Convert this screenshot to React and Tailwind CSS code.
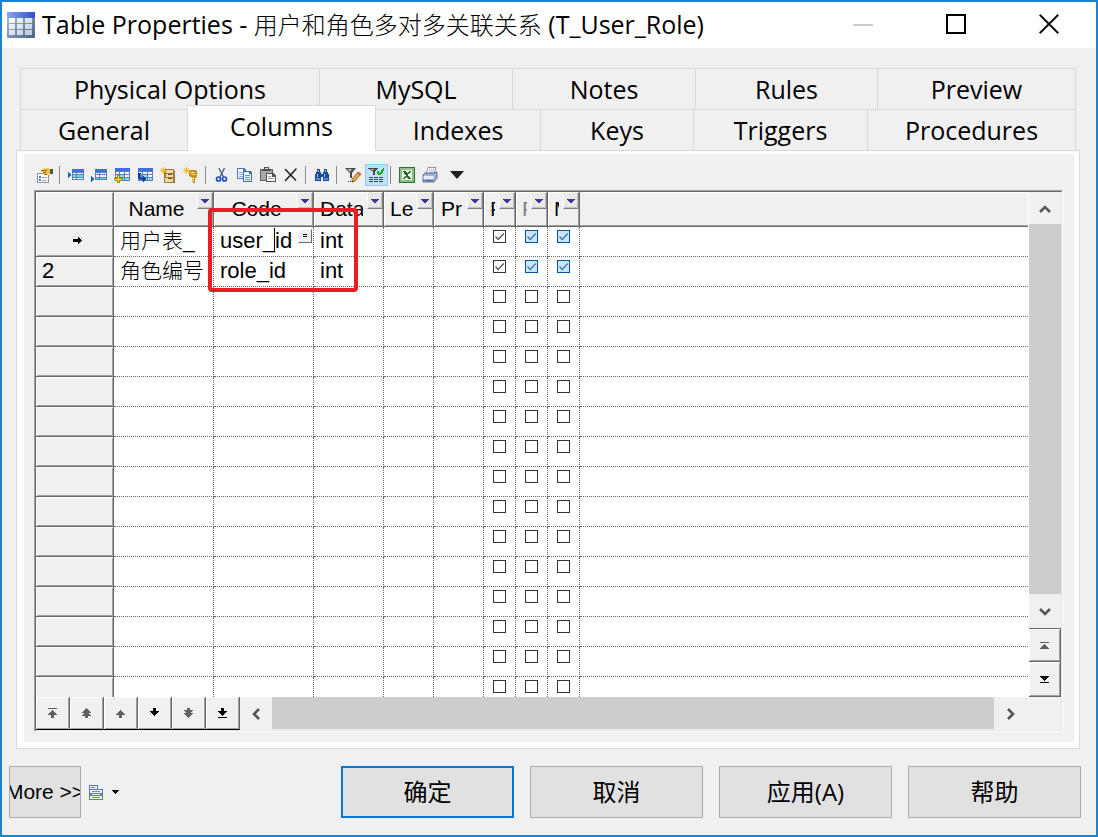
import React, { useState } from 'react';
import clsx from 'clsx';

const backTabs = ['Physical Options', 'MySQL', 'Notes', 'Rules', 'Preview'];
const frontTabs = ['General', 'Columns', 'Indexes', 'Keys', 'Triggers', 'Procedures'];

const headers = [
  { label: 'Name' },
  { label: 'Code' },
  { label: 'Data Type' },
  { label: 'Length' },
  { label: 'Precision' },
  { label: 'P' },
  { label: 'F', disabled: true },
  { label: 'M' },
];
// only the part of each caption that fits its column is drawn
const shortLabels = { 'Data Type': 'Data', Length: 'Le', Precision: 'Pr' };

const rows = [
  { name: '用户表_', code: 'user_id', type: 'int', current: true },
  { name: '角色编号', code: 'role_id', type: 'int' },
  ...Array.from({ length: 14 }, () => null),
];

/* ---------- icons ---------- */

const Icon = ({ children, crisp = true }) => (
  <svg
    viewBox="0 0 16 16"
    className="w-4 h-4 shrink-0"
    fill="none"
    shapeRendering={crisp ? 'crispEdges' : 'auto'}
    aria-hidden="true"
  >
    {children}
  </svg>
);

const TableLogo = () => (
  <svg viewBox="0 0 28 26" className="w-7 h-[26px] shrink-0" aria-hidden="true">
    <defs>
      <linearGradient id="logoTop" x1="0" x2="1">
        <stop offset="0" stopColor="#8aa6f0" />
        <stop offset="1" stopColor="#2f4fc8" />
      </linearGradient>
      <linearGradient id="logoBody" x1="0" y1="0" x2="1" y2="1">
        <stop offset="0" stopColor="#b4c4e0" />
        <stop offset="1" stopColor="#4a6080" />
      </linearGradient>
      <linearGradient id="logoCells" x1="0" y1="0" x2="1" y2="1">
        <stop offset="0" stopColor="#ffffff" />
        <stop offset="1" stopColor="#b8c8e0" />
      </linearGradient>
    </defs>
    <rect x="0" y="0" width="28" height="26" rx="1" fill="url(#logoBody)" />
    <rect x="0" y="0" width="28" height="6" fill="url(#logoTop)" />
    <path d="M2 6h6v5H2zM10 6h6v5h-6zM18 6h7v5h-7zM2 12h6v5H2zM10 12h6v5h-6zM18 12h7v5h-7zM2 18h6v5H2zM10 18h6v5h-6zM18 18h7v5h-7z" fill="url(#logoCells)" />
  </svg>
);

const MiniTable = ({ x = 4, y = 2, accent }) => (
  <>
    <rect x={x} y={y} width="12" height="11" fill="#5b7fb5" />
    <rect x={x} y={y} width="12" height="3" fill="#3f6fe0" />
    {[0, 1, 2].map((r) =>
      [0, 1, 2].map((c) => (
        <rect
          key={`${r}-${c}`}
          x={x + 1 + c * 4 - (c === 2 ? 1 : 0)}
          y={y + 4 + r * 2 + (r === 2 ? 1 : 0)}
          width="3"
          height={r === 1 ? 2 : 1}
          fill={r === accent ? '#5fe0f0' : '#fff'}
        />
      ))
    )}
  </>
);

const Spark = () => (
  <path d="M3 0h1v7h-1zM0 3h7v1H0zM1 1h1v1H1zM5 1h1v1H5zM1 5h1v1H1zM5 5h1v1H5zM2 2h3v3H2z" fill="#f0c020" />
);

const PropertiesIcon = () => (
  <Icon>
    <path d="M0 6h12v10H0z" fill="#8a94a8" />
    <path d="M1 7h10v8H1z" fill="#fff" />
    <path d="M2 9h2v2H2zM2 12h2v2H2z" fill="#5578c0" />
    <path d="M5 10h5v1H5zM5 13h5v1H5z" fill="#9aa4b8" />
    <path d="M4 3l4-2h4l1 2v4l-3 1-2-1H6V5H4z" fill="#f2c445" />
    <path d="M4 3h6v1H4zM6 5h3v1H6zM7 7h3v1H7z" fill="#8a6510" />
    <path d="M13 2h3v5h-3z" fill="#4a5a48" />
  </Icon>
);

const InsertRowIcon = () => (
  <Icon>
    <path d="M0 5l3 3-3 3z" fill="#2060d0" />
    <MiniTable accent={1} />
  </Icon>
);

const AddRowIcon = () => (
  <Icon>
    <path d="M0 9l3 3-3 3z" fill="#2060d0" />
    <MiniTable accent={2} />
  </Icon>
);

const AddColumnsIcon = () => (
  <Icon>
    <path d="M1 1h15v13H1z" fill="#5b7fb5" />
    <path d="M1 1h15v3H1z" fill="#3f6fe0" />
    <path d="M2 5h3v2H2zM6 5h4v2H6zM11 5h4v2h-4zM2 8h3v2H2zM11 8h4v2h-4z" fill="#fff" />
    <path d="M6 8h4v2H6zM6 11h4v2H6zM11 11h4v2h-4z" fill="#6fe6f2" />
    <path d="M3 8h3v3h3v2H6v3H3v-3H0v-2h3z" fill="#a88400" />
    <path d="M4 9h1v3h3v1H5v2H4v-2H1v-1h3z" fill="#ffe838" />
  </Icon>
);

const ReplicateIcon = () => (
  <Icon>
    <path d="M1 1h15v13H1z" fill="#5b7fb5" />
    <path d="M1 1h15v3H1z" fill="#3f6fe0" />
    <path d="M2 5h3v2H2zM6 5h4v2H6zM11 5h4v2h-4zM11 8h4v2h-4z" fill="#fff" />
    <path d="M6 8h4v2H6zM8 11h2v2H8zM11 11h4v2h-4z" fill="#6fe6f2" />
    <path d="M1 6h3v1H3v3h1v1h2V9h1v1h1v1h1v2H8v1H7v1H6v-2H4v-1H2v-1H1z" fill="#123a9c" />
  </Icon>
);

const DomainIcon = () => (
  <Icon>
    <path d="M5 2h9v2h1v11l-1 1H4V7z" fill="#9c7a3c" />
    <path d="M6 3h7v3H6zM6 7h7v3H6zM5 11h8v4H5z" fill="#ecd9a4" />
    <path d="M8 7h4v1H8zM8 11h4v1H8z" fill="#6e5424" />
    <Spark />
  </Icon>
);

const KeyIcon = () => (
  <Icon>
    <path d="M6 4l2-1h4l2 2v4l-2 2v5h-2l-1-1v-1h1v-1h-1v-1l1-1-3-1-1-2z" fill="#c98a14" />
    <path d="M7 5h5v1H7zM8 7h5v1H8zM10 10h1v5h-1z" fill="#ffdf70" />
    <path d="M9 5h2v1H9z" fill="#fff" />
    <Spark />
  </Icon>
);

const CutIcon = () => (
  <Icon crisp={false}>
    <path d="M5 1l4.500 9M10.500 1L6 10" stroke="#4a5870" strokeWidth="1.300" />
    <circle cx="4.500" cy="12" r="2" stroke="#1c50c0" strokeWidth="1.700" />
    <circle cx="10.500" cy="12" r="2" stroke="#1c50c0" strokeWidth="1.700" />
  </Icon>
);

const CopyIcon = () => (
  <Icon>
    <path d="M0 1h7l2 2v9H0z" fill="#4a78b8" />
    <path d="M1 2h5v2h2v7H1z" fill="#fff" />
    <path d="M2 5h5v1H2zM2 7h5v1H2zM2 9h4v1H2z" fill="#7da4dc" />
    <path d="M6 4h7l2 2v9H6z" fill="#3c6cb0" />
    <path d="M7 5h5v2h2v7H7z" fill="#eef5ff" />
    <path d="M8 8h5v1H8zM8 10h5v1H8zM8 12h5v1H8z" fill="#5f90d4" />
  </Icon>
);

const PasteIcon = () => (
  <Icon>
    <path d="M0 2h13v12H0z" fill="#606060" />
    <path d="M1 3h11v10H1z" fill="#a8a8a8" />
    <path d="M4 0h5v2h2v2H2V2h2z" fill="#505050" />
    <path d="M5 1h3v1H5z" fill="#ddd" />
    <path d="M6 6h7l3 3v6H6z" fill="#555" />
    <path d="M7 7h5v3h3v4H7z" fill="#fff" />
    <path d="M8 9h3v1H8zM8 11h6v1H8z" fill="#999" />
  </Icon>
);

const DeleteIcon = () => (
  <Icon crisp={false}>
    <path d="M2.500 2.500l10 10.500M13 2L2.500 13.500" stroke="#222" strokeWidth="1.600" strokeLinecap="round" />
  </Icon>
);

const FindIcon = () => (
  <Icon>
    <path d="M3 2h3v3h1v2h2V5h1V2h3v3h1v2h1v7H9v-4H7v4H1V7h1V5h1z" fill="#1d4a94" />
    <path d="M4 3h1v2H4zM11 3h1v2h-1zM3 7h1v3H3zM10 7h1v3h-1z" fill="#a8c8f0" />
    <path d="M2 11h4v2H2zM10 11h4v2h-4z" fill="#5c90d8" />
  </Icon>
);

const FilterEditIcon = () => (
  <Icon crisp={false}>
    <path d="M0 1h11L7 6v5H5V6z" fill="#4c4c4c" />
    <path d="M2.500 2h4L5.500 5z" fill="#c8c8c8" />
    <path d="M7 12l6-7 3 2-6 7-3 1z" fill="#e0a848" stroke="#7a5520" strokeWidth=".7" />
    <path d="M13 5l3 2-1 1.500-3-2z" fill="#e05050" />
    <path d="M3 14h1v1H3zM5 14h1v1H5zM7 14h1v1H7z" fill="#222" />
  </Icon>
);

const FilterOnIcon = () => (
  <Icon>
    <path d="M0 1h10v1H9v1H8v1H7v4H5V4H3V3H2V2H0z" fill="#444" />
    <path d="M3 2h3v1H3z" fill="#ccc" />
    <path d="M9 4h2v2h1V5h1V3h1V2h1V1h1v3h-1v2h-1v1h-1v1h-3V7H9z" fill="#12b012" />
    <path d="M1 10h4v1H1zM6 10h4v1H6zM11 10h4v1h-4zM1 12h4v1H1zM6 12h4v1H6zM11 12h4v1h-4zM1 14h4v1H1zM6 14h4v1H6zM11 14h4v1h-4z" fill="#22429a" />
  </Icon>
);

const ExcelIcon = () => (
  <Icon>
    <path d="M0 0h16v16H0z" fill="#2c7430" />
    <path d="M1 1h14v14H1z" fill="#8cc088" />
    <path d="M3 3h10v10H3z" fill="#f2f8f0" />
    <path d="M4 4h3v1h1v1h1V5h1V4h2v1h-1v1h-1v1H9v2h1v1h1v1h1v1H9v-1H8v-1H7v1H6v1H4v-1h1v-1h1V9h1V8H6V7H5V5H4z" fill="#1f6a26" />
  </Icon>
);

const PrintIcon = () => (
  <Icon crisp={false}>
    <path d="M6 .5h8L11.500 8H3.500z" fill="#fff" stroke="#7a8cb0" strokeWidth=".9" />
    <path d="M7 3h5M6.500 5h5" stroke="#8fa8d0" strokeWidth=".8" />
    <path d="M1 8l2-2h9l3-1v6l-3 4H1z" fill="#9fb2d0" stroke="#4c628c" strokeWidth=".9" />
    <path d="M1.500 9h10v3h-10z" fill="#e4ecf8" />
    <path d="M3 13h8v1H3z" fill="#4c628c" />
  </Icon>
);

const MenuIcon = () => (
  <svg viewBox="0 0 14 15" className="w-3.5 h-[15px]" shapeRendering="crispEdges" aria-hidden="true">
    <path d="M0 0h9v4h5v11H0z" fill="#5a76b4" />
    <path d="M1 1h7v3H1z" fill="#eaf0fa" />
    <path d="M2 2h4v1H2z" fill="#8a8a8a" />
    <path d="M1 5h12v9H1z" fill="#eef2fa" />
    <path d="M3 6h8v1H3zM3 12h8v1H3z" fill="#808890" />
    <path d="M1 8h12v3H1z" fill="#4a78f0" />
    <path d="M3 9h8v1H3z" fill="#fff" />
  </svg>
);

// arrows of the row navigation bar, on a 9 x 10 canvas
const navPaths = {
  first: 'M0 0h9v1H0zM4 2h1v1h1v1h1v1h1v1h1v1H6v3H3V7H0V6h1V5h1V4h1V3h1z',
  pageUp: 'M4 0h1v1h1v1h1v1h1v1h1v1H7v1h1v1h1v1H6v2H3V8H0V7h1V6h1V5H0V4h1V3h1V2h1V1h1z',
  up: 'M4 2h1v1h1v1h1v1h1v1h1v1H6v3H3V7H0V6h1V5h1V4h1V3h1z',
  down: 'M3 0h3v3h3v1H8v1H7v1H6v1H5v1H4V7H3V6H2V5H1V4H0V3h3z',
  pageDown: 'M3 0h3v2h3v1H8v1H7v1h2v1H8v1H7v1H6v1H5v1H4V9H3V8H2V7H1V6H0V5h2V4H1V3H0V2h3z',
  last: 'M3 0h3v3h3v1H8v1H7v1H6v1H5v1H4V7H3V6H2V5H1V4H0V3h3zM0 9h9v1H0z',
};

const NavArrow = ({ kind }) => (
  <svg viewBox="0 0 9 10" width="9" height="10" fill="currentColor" shapeRendering="crispEdges" aria-hidden="true">
    <path d={navPaths[kind]} />
  </svg>
);

const Chevron = ({ d }) => (
  <svg viewBox="0 0 12 12" width="12" height="12" fill="none" stroke="#555" strokeWidth="2.600" aria-hidden="true">
    <path d={d} />
  </svg>
);

/* ---------- pieces ---------- */

const toolbar = [
  [['Properties', PropertiesIcon]],
  [
    ['Insert a Row', InsertRowIcon],
    ['Add a Row', AddRowIcon],
    ['Add Columns', AddColumnsIcon],
    ['Replicate Columns', ReplicateIcon],
    ['Create Domain', DomainIcon],
    ['Create Key', KeyIcon],
  ],
  [
    ['Cut', CutIcon],
    ['Copy', CopyIcon],
    ['Paste', PasteIcon],
    ['Delete', DeleteIcon],
  ],
  [['Find a Row', FindIcon]],
  [
    ['Customize Columns and Filter', FilterEditIcon],
    ['Enable Filter', FilterOnIcon],
  ],
  [
    ['Export to Excel', ExcelIcon],
    ['Print', PrintIcon],
  ],
];

const Toolbar = () => (
  <div className="flex items-center h-6">
    {toolbar.map((group, i) => (
      <React.Fragment key={group[0][0]}>
        {i > 0 && <span className="w-2 pl-0.5"><span className="block w-px h-[18px] bg-[#8c8c8c]" /></span>}
        {group.map(([label, Glyph]) => (
          <button
            type="button"
            key={label}
            aria-label={label}
            className={clsx(
              'flex items-center w-[23px] h-[22px] border pl-0.5',
              label === 'Enable Filter' ? 'bg-[#c2e0f7] border-[#90c8f6]' : 'border-transparent'
            )}
          >
            <Glyph />
          </button>
        ))}
      </React.Fragment>
    ))}
    <button type="button" aria-label="More tools" className="flex items-center justify-center w-[30px] h-[22px]">
      <svg viewBox="0 0 14 8" width="14" height="8" aria-hidden="true">
        <path d="M0 0h14L7 8z" fill="#1e1e1e" />
      </svg>
    </button>
  </div>
);

const Tab = ({ label, active, onClick }) => (
  <button
    type="button"
    role="tab"
    aria-selected={active}
    onClick={onClick}
    className={clsx(
      'border-t border-l border-[#d9d9d9] last:border-r text-[25px] leading-8',
      active ? 'relative bg-white -mt-1 -mb-px -mr-px border-r pb-1.5' : 'bg-[#f0f0f0]'
    )}
  >
    {label}
  </button>
);

const CheckBox = ({ label, checked, disabled }) => (
  <label className="grid w-[13px] h-[13px]">
    <input
      type="checkbox"
      aria-label={label}
      defaultChecked={checked}
      className={clsx(
        'appearance-none [grid-area:1/1] w-[13px] h-[13px] border',
        disabled ? 'bg-[#cce4f7] border-[#00559b]' : 'bg-white border-[#333]'
      )}
    />
    {checked && (
      <svg
        viewBox="0 0 13 13"
        className={clsx('[grid-area:1/1] pointer-events-none', disabled ? 'text-[#3a78b4]' : 'text-[#555]')}
        fill="none"
        stroke="currentColor"
        strokeWidth="1.300"
        aria-hidden="true"
      >
        <path d="M2.500 6.500l2.700 3L10.800 3.500" />
      </svg>
    )}
  </label>
);

const raised = 'border-r border-b border-[#696969] shadow-[inset_1px_1px_0_#fff,inset_-1px_-1px_0_#a0a0a0]';

const HeaderCell = ({ label, disabled }) => (
  <th scope="col" className={clsx('h-[35px] p-0 bg-[#f0f0f0] font-normal text-[21px]', raised)}>
    <div className="flex h-[34px]">
      <div className="flex-1 min-w-0 pl-1.5 pr-1">
        <div className={clsx('overflow-hidden whitespace-nowrap leading-[34px]', disabled && 'text-[#808080]')}>
          {shortLabels[label] || label}
        </div>
      </div>
      <button
        type="button"
        aria-label={`Filter ${label}`}
        className="flex items-center justify-center shrink-0 w-4 h-[17px] border border-t-white border-l-white border-r-[#808080] border-b-[#808080] bg-[#e8e8e8] shadow-[inset_-1px_-1px_0_#c0c0c0]"
      >
        <svg viewBox="0 0 8 4" width="8" height="4" shapeRendering="crispEdges" aria-hidden="true">
          <path d="M0 0h8v1H7v1H6v1H5v1H3V3H2V2H1V1H0z" fill="#38389a" />
        </svg>
      </button>
    </div>
  </th>
);

const cell = 'h-[30px] border-r border-b border-dotted border-[#696969] overflow-hidden whitespace-nowrap';

const ColumnRow = ({ row, index }) => {
  const n = index + 1;
  return (
    <tr>
      <th scope="row" className={clsx('h-[30px] p-0 pl-1.5 pb-0.5 bg-[#f0f0f0] font-normal text-left leading-[26px]', raised)}>
        {row?.current ? (
          <svg viewBox="0 0 9 7" width="9" height="7" className="mx-auto" shapeRendering="crispEdges" aria-label="Current row">
            <path d="M0 2h5V0h1v1h1v1h1v1h1v1H8v1H7v1H6v1H5V5H0z" />
          </svg>
        ) : (
          row && n
        )}
      </th>
      <td className={clsx(cell, 'p-0 pl-1.5 pb-0.5 text-[21px] leading-[26px] font-light')}>{row?.name}</td>
      <td className={clsx(cell, 'p-0 pb-0.5')}>
        {row?.current ? (
          <div className="relative flex items-start">
            <input
              aria-label="Code"
              defaultValue={row.code}
              className="flex-1 min-w-0 h-[26px] pl-1.5 bg-transparent outline-none leading-[26px]"
            />
            <span className="absolute left-[60px] top-0 w-px h-6 bg-black" />
            <button
              type="button"
              aria-label="Expand code"
              className="flex items-center justify-center w-3.5 h-3.5 mt-px mr-px border border-t-white border-l-white border-r-[#696969] border-b-[#696969] bg-[#f0f0f0]"
            >
              <svg viewBox="0 0 4 3" width="4" height="3" shapeRendering="crispEdges" aria-hidden="true">
                <path d="M0 0h4v1H0zM0 2h4v1H0z" />
              </svg>
            </button>
          </div>
        ) : (
          <div className="pl-1.5 leading-[26px]">{row?.code}</div>
        )}
      </td>
      <td className={clsx(cell, 'p-0 pb-0.5')}>
        <div className="pl-1.5 leading-[26px]">{row?.type}</div>
      </td>
      <td className={clsx(cell, 'p-0')} />
      <td className={clsx(cell, 'p-0')} />
      {['Primary', 'Foreign', 'Mandatory'].map((flag) => (
        <td key={flag} className={clsx(cell, 'align-top p-0 pt-[3px] pl-[9px]')}>
          <CheckBox label={`${flag} ${n}`} checked={!!row} disabled={!!row && flag !== 'Primary'} />
        </td>
      ))}
      <td className="h-[30px] p-0 border-b border-dotted border-[#696969]" />
    </tr>
  );
};

const ColumnTable = () => (
  <table className="table-fixed w-full border-separate border-spacing-0">
    <colgroup>
      <col className="w-[78px]" />
      <col className="w-[100px]" />
      <col className="w-[100px]" />
      <col className="w-[70px]" />
      <col className="w-[50px]" />
      <col className="w-[50px]" />
      <col className="w-8" />
      <col className="w-8" />
      <col className="w-8" />
      <col />
    </colgroup>
    <thead>
      <tr>
        <td className={clsx('p-0 bg-[#f0f0f0]', raised)} />
        {headers.map((h) => (
          <HeaderCell key={h.label} {...h} />
        ))}
        <td className="p-0 bg-[#f0f0f0] border-b border-[#696969] shadow-[inset_0_1px_0_#fff,inset_0_-1px_0_#a0a0a0]" />
      </tr>
    </thead>
    <tbody>
      {rows.map((row, i) => (
        <ColumnRow key={i} row={row} index={i} />
      ))}
    </tbody>
  </table>
);

const VerticalScroll = () => (
  <div className="flex flex-col w-[33px] shrink-0 border-l border-white">
    <button type="button" aria-label="Scroll up" className="flex items-center justify-center h-8 pt-0.5">
      <Chevron d="M1 9l5-5 5 5" />
    </button>
    <div className="flex-1 bg-[#cdcdcd]" />
    <button type="button" aria-label="Scroll down" className="flex items-center justify-center h-[34px] pt-0.5">
      <Chevron d="M1 3l5 5 5-5" />
    </button>
    <button type="button" aria-label="Scroll to top" className={clsx('flex items-center justify-center h-[34px] border-t text-[#606060]', raised)}>
      <svg viewBox="0 0 9 7" width="9" height="7" fill="currentColor" shapeRendering="crispEdges" aria-hidden="true">
        <path d="M0 0h9v1H0zM4 2h1v1h1v1h1v1h1v1h1v1H0V6h1V5h1V4h1V3h1z" />
      </svg>
    </button>
    <button type="button" aria-label="Scroll to bottom" className={clsx('flex items-center justify-center h-[35px]', raised)}>
      <svg viewBox="0 0 9 7" width="9" height="7" fill="currentColor" shapeRendering="crispEdges" aria-hidden="true">
        <path d="M0 6h9v1H0zM0 0h9v1H8v1H7v1H6v1H5v1H4V4H3V3H2V2H1V1H0z" />
      </svg>
    </button>
  </div>
);

const NavBar = () => (
  <div className="flex h-[33px]">
    {Object.keys(navPaths).map((kind, i) => (
      <button
        type="button"
        key={kind}
        aria-label={`Go ${kind}`}
        className={clsx(
          'flex items-center justify-center w-[34px] border-r border-b border-r-[#696969] border-b-black shadow-[inset_1px_1px_0_#fff,inset_-1px_-1px_0_#a0a0a0]',
          i < 3 || kind === 'pageDown' ? 'text-[#606060]' : 'text-black'
        )}
      >
        <NavArrow kind={kind} />
      </button>
    ))}
    <button type="button" aria-label="Scroll left" className="flex items-center justify-center w-8">
      <Chevron d="M9 1L4 6l5 5" />
    </button>
    <div className="flex-1 h-8 bg-[#cdcdcd]" />
    <button type="button" aria-label="Scroll right" className="flex items-center justify-center w-[34px] mr-[33px]">
      <Chevron d="M3 1l5 5-5 5" />
    </button>
  </div>
);

const TitleBar = () => (
  <header className="flex items-center h-[46px] shrink-0 pl-[5px] pr-px bg-white">
    <TableLogo />
    <h1 className="flex-1 pl-[7px] pb-0.5 text-[25px] leading-8 whitespace-nowrap">
      Table Properties - <span className="text-2xl font-light">用户和角色多对多关联关系</span> (T_User_Role)
    </h1>
    <button type="button" aria-label="Minimize" className="flex items-center justify-center w-[93px] h-full">
      <span className="w-5 h-0.5 bg-[#cbcbcb]" />
    </button>
    <button type="button" aria-label="Maximize" className="flex items-center justify-center w-[93px] h-full pb-0.5">
      <span className="w-5 h-5 border-2 border-black" />
    </button>
    <button type="button" aria-label="Close" className="flex items-center justify-center w-[93px] h-full pb-0.5">
      <svg viewBox="0 0 20 20" width="20" height="20" stroke="#111" strokeWidth="2" aria-hidden="true">
        <path d="M.7.7l18.600 18.600M19.300.7L.7 19.300" />
      </svg>
    </button>
  </header>
);

const App = () => {
  const [tab, setTab] = useState('Columns');

  return (
    <div className='flex flex-col h-screen border-2 border-[#1883d7] bg-[#f0f0f0] text-black font-["Open_Sans","Noto_Sans_CJK_SC",sans-serif]'>
      <TitleBar />

      <main className="flex flex-col flex-1 min-h-0 pl-3.5 pr-4 pt-5">
        <div role="tablist" className="px-1">
          <div className="grid grid-cols-[299fr_193fr_183fr_182fr_199fr] h-[41px]">
            {backTabs.map((t) => (
              <Tab key={t} label={t} active={t === tab} onClick={() => setTab(t)} />
            ))}
          </div>
          <div className="grid grid-cols-[167fr_188fr_165fr_153fr_174fr_209fr] h-[41px]">
            {frontTabs.map((t) => (
              <Tab key={t} label={t} active={t === tab} onClick={() => setTab(t)} />
            ))}
          </div>
        </div>

        <div className="flex flex-col flex-1 min-h-0 border border-[#d9d9d9] bg-white pt-[3px] pb-1.5 pl-[7px] pr-[5px]">
          <div className="flex flex-col flex-1 min-h-0 bg-[#f0f0f0] pt-[9px] pb-2.5 pl-2.5 pr-[11px]">
            <Toolbar />

            {/* sunken grid frame */}
            <div className='flex flex-1 min-h-0 mt-[3px] border border-t-[#a0a0a0] border-l-[#a0a0a0] border-r-white border-b-white text-[22px] font-["Liberation_Sans","Noto_Sans_CJK_SC",sans-serif]'>
              <div className="flex flex-col flex-1 min-w-0 border border-t-[#696969] border-l-[#696969] border-r-[#e3e3e3] border-b-[#e3e3e3]">
                <div className="flex flex-1 min-h-0">
                  <div className="relative flex-1 min-w-0 overflow-hidden bg-white">
                    <ColumnTable />
                    {/* highlight around the key columns */}
                    <div className="absolute left-[172px] top-4 w-[150px] h-[84px] border-4 border-[#ed1c24] rounded-sm pointer-events-none" />
                  </div>
                  <VerticalScroll />
                </div>
                <NavBar />
              </div>
            </div>
          </div>
        </div>
      </main>

      <footer className="flex items-center shrink-0 pt-[17px] pb-[17px] pl-[7px] pr-[15px]">
        <button
          type="button"
          className='flex items-center justify-center w-[72px] h-[52px] border border-[#adadad] bg-[#e1e1e1] overflow-hidden whitespace-nowrap text-[21px] font-["Liberation_Sans",sans-serif]'
        >
          More &gt;&gt;
        </button>
        <button type="button" aria-label="Menu" className="flex items-center gap-2 ml-2">
          <MenuIcon />
          <svg viewBox="0 0 8 4" width="8" height="4" shapeRendering="crispEdges" aria-hidden="true">
            <path d="M0 0h8L4 4z" />
          </svg>
        </button>
        <div className="flex gap-4 ml-auto">
          {['确定', '取消', '应用(A)', '帮助'].map((label, i) => (
            <button
              type="button"
              key={label}
              className={clsx(
                'w-[173px] h-[52px] bg-[#e1e1e1] text-2xl',
                i === 0 ? 'border-2 border-[#0078d7]' : 'border border-[#adadad]'
              )}
            >
              {label}
            </button>
          ))}
        </div>
      </footer>
    </div>
  );
};

export default App;
